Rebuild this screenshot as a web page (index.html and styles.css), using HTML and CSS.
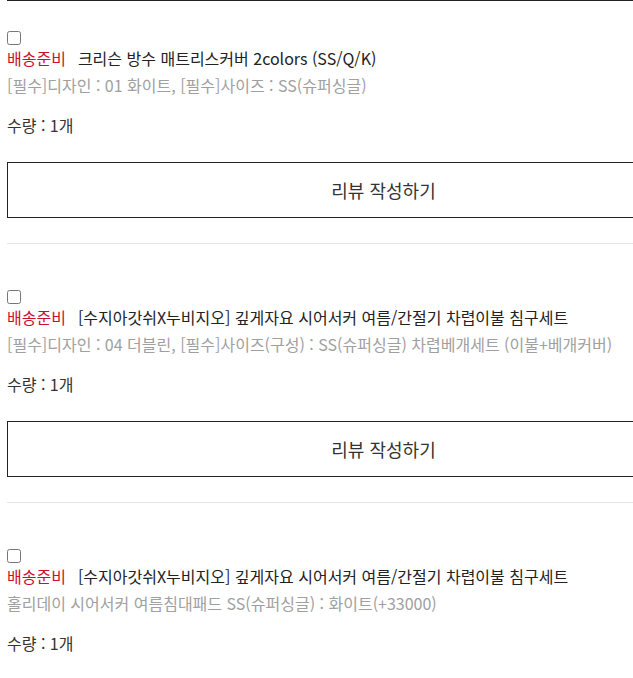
FILE: index.html
```html
<!DOCTYPE html>
<html lang="ko">
<head>
<meta charset="utf-8">
<link rel="stylesheet" href="styles.css">
</head>
<body>
<div class="list">
  <div class="item">
    <input type="checkbox" class="check">
    <div class="title"><span class="status">배송준비</span><span class="name">크리슨 방수 매트리스커버 2colors (SS/Q/K)</span></div>
    <div class="option">[필수]디자인 : 01 화이트, [필수]사이즈 : SS(슈퍼싱글)</div>
    <div class="qty">수량 : 1개</div>
    <button class="review">리뷰 작성하기</button>
  </div>
  <div class="item">
    <input type="checkbox" class="check">
    <div class="title"><span class="status">배송준비</span><span class="name">[수지아갓쉬X누비지오] 깊게자요 시어서커 여름/간절기 차렵이불 침구세트</span></div>
    <div class="option">[필수]디자인 : 04 더블린, [필수]사이즈(구성) : SS(슈퍼싱글) 차렵베개세트 (이불+베개커버)</div>
    <div class="qty">수량 : 1개</div>
    <button class="review">리뷰 작성하기</button>
  </div>
  <div class="item">
    <input type="checkbox" class="check">
    <div class="title"><span class="status">배송준비</span><span class="name">[수지아갓쉬X누비지오] 깊게자요 시어서커 여름/간절기 차렵이불 침구세트</span></div>
    <div class="option">홀리데이 시어서커 여름침대패드 SS(슈퍼싱글) : 화이트(+33000)</div>
    <div class="qty">수량 : 1개</div>
    <button class="review">리뷰 작성하기</button>
  </div>
</div>
</body>
</html>
```
FILE: styles.css
```css
html, body {
  margin: 0;
  padding: 0;
  overflow: hidden;
  background: #fff;
}
body {
  font-family: "Noto Sans CJK KR", "Noto Sans", sans-serif;
  color: #222;
}
.list {
  margin-left: 7px;
  width: 753px;
  border-top: 1px solid #222;
}
.item {
  padding-top: 30px;
  padding-bottom: 25px;
  border-bottom: 1px solid #e5e5e5;
}
.item + .item {
  margin-top: 16px;
}
.check {
  display: block;
  margin: 0;
  width: 14px;
  height: 14px;
}
.title {
  font-size: 16px;
  line-height: 26px;
  margin-top: 0;
  white-space: nowrap;
}
.status {
  color: #c8102e;
  margin-right: 12px;
}
.option {
  font-size: 16px;
  line-height: 28px;
  color: #a0a0a0;
  white-space: nowrap;
}
.qty {
  font-size: 16px;
  line-height: 28px;
  color: #333;
  margin-top: 12px;
}
.review {
  display: block;
  margin-top: 23px;
  width: 100%;
  height: 56px;
  background: #fff;
  border: 1px solid #222;
  font-family: inherit;
  font-size: 18px;
  color: #333;
  padding: 0;
}
```
